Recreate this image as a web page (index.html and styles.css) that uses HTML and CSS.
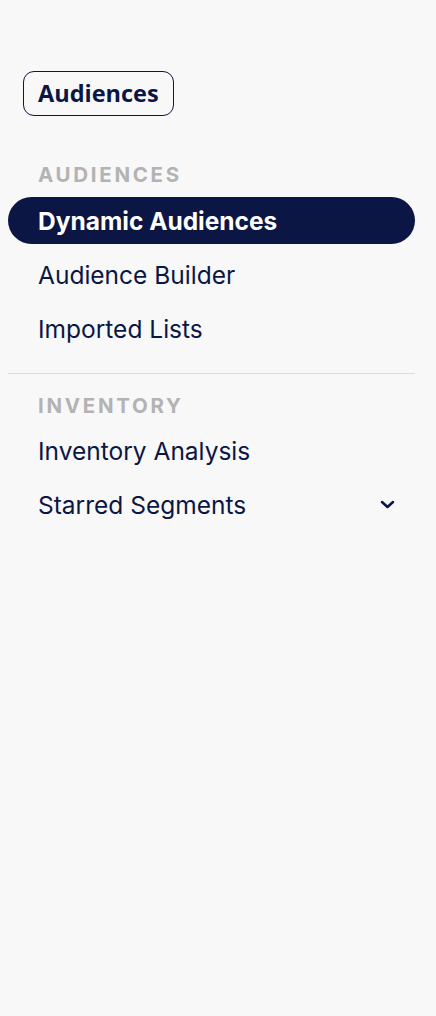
FILE: index.html
```html
<!DOCTYPE html>
<html>
<head>
<meta charset="utf-8">
<link rel="stylesheet" href="styles.css">
</head>
<body>
<nav class="sidebar">
  <div class="brand"><span class="brand-btn">Audiences</span></div>
  <div class="section">
    <div class="section-title">AUDIENCES</div>
    <a class="item active">Dynamic Audiences</a>
    <a class="item">Audience Builder</a>
    <a class="item">Imported Lists</a>
  </div>
  <hr class="divider">
  <div class="section">
    <div class="section-title inv">INVENTORY</div>
    <a class="item">Inventory Analysis</a>
    <a class="item has-sub">Starred Segments
      <svg class="chev" width="15" height="9" viewBox="0 0 15 9"><path d="M2 2 L7.5 7 L13 2" fill="none" stroke="#0b1645" stroke-width="2.5" stroke-linecap="round" stroke-linejoin="round"/></svg>
    </a>
  </div>
</nav>
</body>
</html>
```
FILE: styles.css
```css
html, body { margin: 0; padding: 0; }
body {
  background: #f8f8f8;
  font-family: Inter, "Noto Sans", sans-serif;
  color: #0b1645;
  width: 436px;
  min-height: 1016px;
}
.sidebar {
  padding: 71px 21px 0 8px;
  display: flex;
  flex-direction: column;
}
.brand { padding-left: 15px; }
.brand-btn {
  display: inline-block;
  box-sizing: border-box;
  height: 45px;
  line-height: 42px;
  padding: 0 14px 0 14px;
  border: 1px solid #0b1645;
  border-radius: 11px;
  font-family: "Open Sans", sans-serif;
  font-weight: 700;
  font-size: 23.5px;
  color: #0b1645;
}
.section { display: flex; flex-direction: column; }
.section-title {
  padding-left: 30px;
  margin-top: 47px;
  height: 34px;
  line-height: 24px;
  font-size: 20.5px;
  font-weight: 700;
  letter-spacing: 2.7px;
  color: #b3b3b3;
}
.section-title.inv { margin-top: 11px; height: 42px; line-height: 42px; }
.item {
  display: flex;
  align-items: center;
  height: 47px;
  margin-bottom: 7px;
  padding: 0 20px 0 30px;
  border-radius: 24px;
  font-size: 24.5px;
  font-weight: 400;
  color: #0b1645;
  letter-spacing: 0;
}
.item.active {
  background: #0b1645;
  color: #fff;
  font-weight: 700;
  letter-spacing: 0;
}
.item.has-sub { justify-content: space-between; }
.chev { display: block; }
.divider {
  border: 0;
  border-top: 1px solid #dcdcdc;
  margin: 14px 0 0 0;
  width: 407px;
}
```
